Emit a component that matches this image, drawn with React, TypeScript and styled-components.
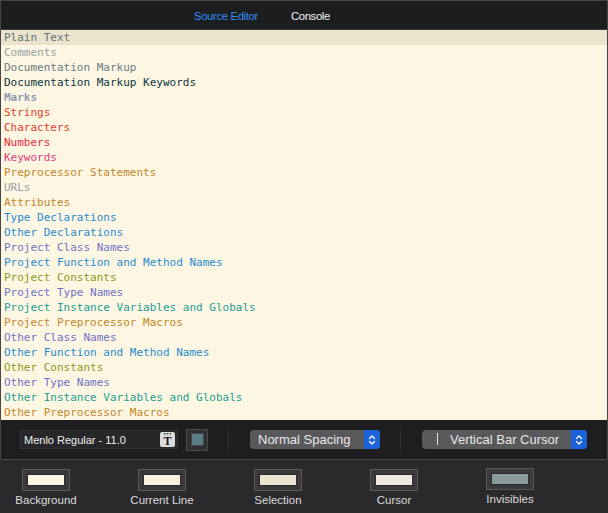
import React from "react";
import styled, { createGlobalStyle } from "styled-components";

const Global = createGlobalStyle`
  html, body { margin: 0; padding: 0; background: #2a2a2c; }
  #root { width: 608px; height: 513px; overflow: hidden; }
`;

const Page = styled.div`
  width: 608px;
  height: 513px;
  background: #2a2a2c;
  display: flex;
  flex-direction: column;
  font-family: "Liberation Sans", Arial, sans-serif;
`;

const Frame = styled.div`
  border: 1px solid #464648;
  display: flex;
  flex-direction: column;
  background: #1e1e20;
`;

const Header = styled.div`
  height: 28px;
  border-bottom: 1px solid #3a3a3c;
  background: #1c1d1f;
  display: flex;
  align-items: center;
  padding-left: 193px;
  gap: 33px;
`;

const Tab = styled.span<{ $active?: boolean }>`
  font-size: 11.3px;
  letter-spacing: -0.35px;
  color: ${(p) => (p.$active ? "#2f8cf5" : "#f2f2f2")};
  padding-top: 1px;
`;

const List = styled.div`
  background: #fdf6e3;
  height: 390px;
  display: flex;
  flex-direction: column;
`;

const Row = styled.div<{ $color: string; $current?: boolean; $bold?: boolean }>`
  height: 15px;
  line-height: 15px;
  padding-left: 3px;
  font-family: "DejaVu Sans Mono", Menlo, monospace;
  font-size: 11px;
  color: ${(p) => p.$color};
  font-weight: ${(p) => (p.$bold ? 700 : 400)};
  background: ${(p) => (p.$current ? "#ece3cd" : "transparent")};
  white-space: pre;
`;

const Toolbar = styled.div`
  height: 39px;
  background: #1e1e20;
  display: flex;
  align-items: center;
  padding-left: 19px;
`;

const FontField = styled.div`
  width: 151px;
  height: 17px;
  border: 1px solid #333335;
  background: #272729;
  display: flex;
  align-items: center;
  justify-content: space-between;
  padding: 0 2px 0 3px;
  box-sizing: content-box;
  margin-right: 8px;
`;

const FontName = styled.span`
  font-size: 11px;
  color: #f0f0f0;
`;

const FontIcon = styled.span`
  width: 15px;
  height: 15px;
  border-radius: 2px;
  background: #dcdcdc;
  position: relative;
  display: flex;
  align-items: flex-end;
  justify-content: center;
  font-family: "Liberation Serif", "DejaVu Serif", serif;
  font-weight: 700;
  font-size: 12px;
  line-height: 12px;
  color: #1a1a1a;
`;

const Dots = styled.svg`
  position: absolute;
  top: 1px;
  left: 4px;
`;

const ColorWell = styled.div`
  width: 20px;
  height: 20px;
  border: 1px solid #4a4a4c;
  background: #303032;
  display: flex;
  align-items: center;
  justify-content: center;
`;

const WellColor = styled.div<{ $color: string }>`
  width: 11px;
  height: 11px;
  border: 1px solid #3c4a4e;
  background: ${(p) => p.$color};
`;

const Divider = styled.div`
  width: 1px;
  height: 22px;
  background: #2e2e30;
  margin: 0 21px 0 20px;
`;

const Select = styled.div<{ $width: number }>`
  width: ${(p) => p.$width}px;
  height: 19px;
  border-radius: 4px;
  background: #59595b;
  display: flex;
  align-items: center;
  overflow: hidden;
`;

const SelectText = styled.span`
  flex: 1;
  font-size: 13px;
  color: #e8e8e8;
  padding-left: 8px;
  white-space: pre;
`;

const CursorGlyph = styled.span`
  display: inline-block;
  width: 1px;
  height: 12px;
  background: #e0e0e0;
  margin: 0 12px 0 7px;
  vertical-align: -1px;
`;

const Stepper = styled.div`
  width: 16px;
  height: 19px;
  background: #1c62da;
  display: flex;
  align-items: center;
  justify-content: center;
`;

const Bottom = styled.div`
  flex: 1;
  display: flex;
  gap: 24px;
  padding-top: 9px;
`;

const SwatchCol = styled.div<{ $lift?: boolean }>`
  width: 92px;
  display: flex;
  flex-direction: column;
  align-items: center;
  margin-top: ${(p) => (p.$lift ? "-1px" : "0")};
`;

const SwatchBox = styled.div`
  width: 46px;
  height: 20px;
  border: 1px solid #5a5a5c;
  background: #3a3a3c;
  display: flex;
  align-items: center;
  justify-content: center;
`;

const SwatchFill = styled.div<{ $color: string }>`
  width: 36px;
  height: 10px;
  border: 1px solid #2a2a2a;
  background: ${(p) => p.$color};
`;

const SwatchLabel = styled.span`
  margin-top: 3px;
  font-size: 11.5px;
  color: #dcdcdc;
`;

const rows: { t: string; c: string; bold?: boolean }[] = [
  { t: "Plain Text", c: "#5f7379" },
  { t: "Comments", c: "#95a3a3" },
  { t: "Documentation Markup", c: "#6b7c81" },
  { t: "Documentation Markup Keywords", c: "#0b3540" },
  { t: "Marks", c: "#8d9daf", bold: true },
  { t: "Strings", c: "#e0432c" },
  { t: "Characters", c: "#e33b35" },
  { t: "Numbers", c: "#e52a38" },
  { t: "Keywords", c: "#de3c78" },
  { t: "Preprocessor Statements", c: "#c2862a" },
  { t: "URLs", c: "#9aa2a2" },
  { t: "Attributes", c: "#c2862a" },
  { t: "Type Declarations", c: "#1d8cd0" },
  { t: "Other Declarations", c: "#1d8cd0" },
  { t: "Project Class Names", c: "#6f73c6" },
  { t: "Project Function and Method Names", c: "#1d8cd0" },
  { t: "Project Constants", c: "#8a9a1c" },
  { t: "Project Type Names", c: "#6f73c6" },
  { t: "Project Instance Variables and Globals", c: "#1a9e93" },
  { t: "Project Preprocessor Macros", c: "#c2862a" },
  { t: "Other Class Names", c: "#6f73c6" },
  { t: "Other Function and Method Names", c: "#1d8cd0" },
  { t: "Other Constants", c: "#8a9a1c" },
  { t: "Other Type Names", c: "#6f73c6" },
  { t: "Other Instance Variables and Globals", c: "#1a9e93" },
  { t: "Other Preprocessor Macros", c: "#c2862a" },
];

const swatches: { label: string; color: string; lift?: boolean }[] = [
  { label: "Background", color: "#fdf6e3" },
  { label: "Current Line", color: "#f8f0dc" },
  { label: "Selection", color: "#ece4d0" },
  { label: "Cursor", color: "#f1ebdf" },
  { label: "Invisibles", color: "#8a9c9e", lift: true },
];

const Chevrons = () => (
  <svg width="8" height="12" viewBox="0 0 8 12" fill="none" stroke="#ffffff" strokeWidth="1.3" strokeLinecap="round" strokeLinejoin="round">
    <path d="M1.5 4.5 L4 2 L6.5 4.5" />
    <path d="M1.5 7.5 L4 10 L6.5 7.5" />
  </svg>
);

export default function App() {
  return (
    <Page>
      <Global />
      <Frame>
        <Header>
          <Tab $active>Source Editor</Tab>
          <Tab>Console</Tab>
        </Header>
        <List>
          {rows.map((r, i) => (
            <Row key={r.t} $color={r.c} $bold={r.bold} $current={i === 0}>
              {r.t}
            </Row>
          ))}
        </List>
        <Toolbar>
          <FontField>
            <FontName>Menlo Regular - 11.0</FontName>
            <FontIcon>
              <Dots width="7" height="2" viewBox="0 0 7 2">
                <rect x="0" y="0" width="1.4" height="1.4" fill="#333" />
                <rect x="2.8" y="0" width="1.4" height="1.4" fill="#333" />
                <rect x="5.6" y="0" width="1.4" height="1.4" fill="#333" />
              </Dots>
              T
            </FontIcon>
          </FontField>
          <ColorWell>
            <WellColor $color="#5a7c84" />
          </ColorWell>
          <Divider />
          <Select $width={130}>
            <SelectText>Normal Spacing</SelectText>
            <Stepper>
              <Chevrons />
            </Stepper>
          </Select>
          <Divider />
          <Select $width={165}>
            <SelectText>
              <CursorGlyph />
              Vertical Bar Cursor
            </SelectText>
            <Stepper>
              <Chevrons />
            </Stepper>
          </Select>
        </Toolbar>
      </Frame>
      <Bottom>
        {swatches.map((s) => (
          <SwatchCol key={s.label} $lift={s.lift}>
            <SwatchBox>
              <SwatchFill $color={s.color} />
            </SwatchBox>
            <SwatchLabel>{s.label}</SwatchLabel>
          </SwatchCol>
        ))}
      </Bottom>
    </Page>
  );
}
